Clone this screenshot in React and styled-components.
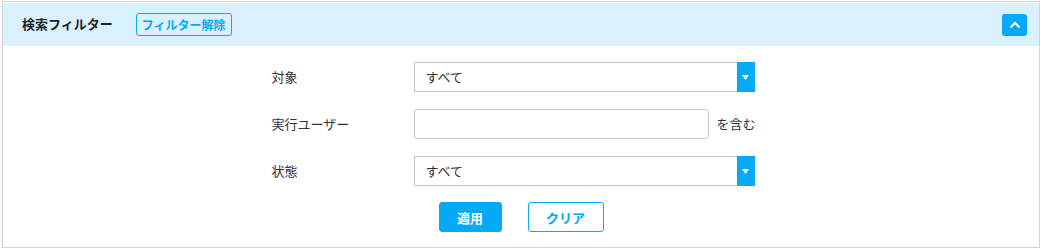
import React from "react"
import styled, {createGlobalStyle} from "styled-components"

const BLUE = "#05a9f4"
const TEXT = "#333"

const GlobalStyle = createGlobalStyle`
  body {
    margin: 0;
    background: #fff;
    font-family: "Noto Sans CJK JP", "Noto Sans", sans-serif;
    font-size: 13px;
    line-height: 1.4;
    color: ${TEXT};
  }
`

const Panel = styled.section`
  margin: 1px 0 0 2px;
  height: 247px;
  border: 1px solid #d3d3d3;
  box-shadow: 0 1px 2px rgba(0, 0, 0, 0.12);
  background: #fff;
  box-sizing: border-box;
`

const Header = styled.header`
  display: flex;
  align-items: center;
  height: 43px;
  padding: 0 12px 0 19px;
  margin-top: 1px;
  background: #d9f1fe;
`

const Title = styled.h2`
  margin: 0;
  font-size: 13px;
  font-weight: bold;
  color: #222;
`

const OutlineButton = styled.button`
  display: inline-flex;
  align-items: center;
  justify-content: center;
  box-sizing: border-box;
  height: ${props => props.h || 23}px;
  width: ${props => props.w}px;
  margin: 0;
  padding: 0;
  border: 1px solid ${BLUE};
  border-radius: 3px;
  background: ${props => (props.filled ? BLUE : "#fff")};
  color: ${props => (props.filled ? "#fff" : BLUE)};
  font-family: inherit;
  font-size: ${props => props.fs || 12}px;
  font-weight: bold;
  cursor: pointer;
`

const ClearFilter = styled(OutlineButton)`
  margin-left: 23px;
  background: transparent;
`

const Collapse = styled.button`
  margin-left: auto;
  width: 25px;
  height: 22px;
  padding: 0;
  border: 0;
  border-radius: 3px;
  background: ${BLUE};
  display: flex;
  align-items: center;
  justify-content: center;
`

const Body = styled.div`
  padding: 16px 16px 0 0;
`

const Form = styled.div`
  display: grid;
  grid-template-columns: 142px 295px 46px;
  row-gap: 17px;
  justify-content: center;
  align-items: center;
`

const Label = styled.label`
  font-size: 13px;
`

const SelectBox = styled.div`
  grid-column: span 2;
  position: relative;
  display: flex;
  align-items: center;
  width: 341px;
  height: 30px;
  box-sizing: border-box;
  border: 1px solid #c8c8c8;
  padding-left: 11px;
  font-size: 13px;
`

const Arrow = styled.span`
  position: absolute;
  top: -1px;
  right: -1px;
  bottom: -1px;
  width: 18px;
  background: ${BLUE};
  display: flex;
  align-items: center;
  justify-content: center;
`

const TextInput = styled.input`
  width: 295px;
  height: 30px;
  box-sizing: border-box;
  border: 1px solid #c8c8c8;
  border-radius: 3px;
  margin: 0;
`

const Suffix = styled.span`
  padding-left: 8px;
  font-size: 13px;
  white-space: nowrap;
`

const Actions = styled.div`
  display: flex;
  justify-content: center;
  gap: 26px;
  margin-top: 16px;
  padding-left: 16px;
`

const Select = ({value}) => (
  <SelectBox>
    {value}
    <Arrow>
      <svg width="7" height="5" viewBox="0 0 7 5">
        <path d="M0 0H7L3.5 5Z" fill="#fff" />
      </svg>
    </Arrow>
  </SelectBox>
)

export default function App() {
  return (
    <>
      <GlobalStyle />
      <Panel>
        <Header>
          <Title>検索フィルター</Title>
          <ClearFilter w={96}>フィルター解除</ClearFilter>
          <Collapse>
            <svg width="12" height="8" viewBox="0 0 12 8">
              <path d="M1.5 6.5L6 2L10.5 6.5" fill="none" stroke="#fff" strokeWidth="2" />
            </svg>
          </Collapse>
        </Header>
        <Body>
          <Form>
            <Label>対象</Label>
            <Select value="すべて" />
            <Label>実行ユーザー</Label>
            <TextInput />
            <Suffix>を含む</Suffix>
            <Label>状態</Label>
            <Select value="すべて" />
          </Form>
          <Actions>
            <OutlineButton filled w={63} h={30} fs={13}>適用</OutlineButton>
            <OutlineButton w={76} h={30} fs={13}>クリア</OutlineButton>
          </Actions>
        </Body>
      </Panel>
    </>
  )
}
